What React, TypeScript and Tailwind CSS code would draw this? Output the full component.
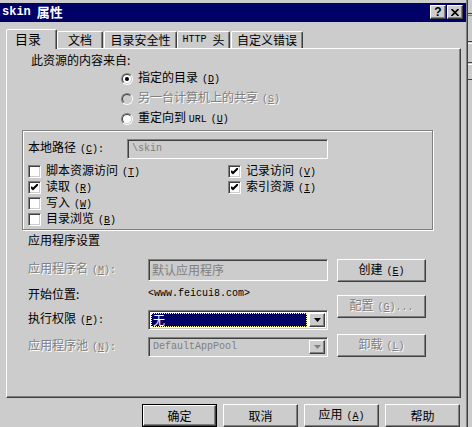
import React from "react";

const mono = "font-['Liberation_Mono','Noto_Sans_CJK_SC',monospace] text-[10px]";
const dis = "text-[#808080] [text-shadow:1px_1px_0_#ffffff]";
const raised =
  "border border-t-white border-l-white border-r-[#404040] border-b-[#404040] shadow-[inset_-1px_-1px_0_#808080]";
const sunken =
  "border border-t-[#808080] border-l-[#808080] border-r-white border-b-white shadow-[inset_1px_1px_0_#404040,inset_-1px_-1px_0_#cccccc]";

function Key({ k, tail = "" }: { k: string; tail?: string }) {
  return (
    <span className={`${mono} ml-[4px]`}>
      (<span className="underline underline-offset-1">{k}</span>){tail}
    </span>
  );
}

function Radio({ on, disabled }: { on?: boolean; disabled?: boolean }) {
  return (
    <span className="w-[12px] h-[12px] rounded-full flex items-center justify-center border border-t-[#808080] border-l-[#808080] border-r-white border-b-white">
      <span
        className={`w-[10px] h-[10px] rounded-full flex items-center justify-center border border-t-[#404040] border-l-[#404040] border-r-[#cccccc] border-b-[#cccccc] ${
          disabled ? "bg-[#cccccc]" : "bg-white"
        }`}
      >
        {on && <span className="w-[4px] h-[4px] rounded-full bg-black" />}
      </span>
    </span>
  );
}

function Check({ on }: { on?: boolean }) {
  return (
    <span className={`w-[13px] h-[13px] shrink-0 bg-white flex items-center justify-center ${sunken}`}>
      {on && (
        <svg width="7" height="7" viewBox="0 0 7 7">
          <path d="M0 3 L2 5 L7 0" stroke="black" strokeWidth="2" fill="none" />
        </svg>
      )}
    </span>
  );
}

function Arrow({ gray }: { gray?: boolean }) {
  return (
    <svg width="7" height="4" viewBox="0 0 7 4">
      <polygon points="0,0 7,0 3.5,4" fill={gray ? "#808080" : "black"} />
    </svg>
  );
}

function Btn({
  children,
  w = "w-[75px]",
  def,
}: {
  children: React.ReactNode;
  w?: string;
  def?: boolean;
}) {
  if (def)
    return (
      <div className={`${w} h-[23px] border border-black flex`}>
        <div className={`flex-1 flex items-center justify-center bg-[#cccccc] ${raised}`}>{children}</div>
      </div>
    );
  return (
    <div className={`${w} h-[23px] flex items-center justify-center bg-[#cccccc] ${raised}`}>{children}</div>
  );
}

function Tab({ label, active, w }: { label: React.ReactNode; active?: boolean; w: string }) {
  return (
    <div
      className={`${w} flex items-center justify-center rounded-t-[2px] border-l border-t border-r border-l-white border-t-white border-r-[#404040] shadow-[inset_-1px_0_0_#808080] bg-[#cccccc] ${
        active ? "h-[20px] -mb-px relative z-10 justify-start pl-[8px] text-[13px]" : "h-[17px]"
      }`}
    >
      {label}
    </div>
  );
}

export default function App() {
  return (
    <div className="w-[472px] h-[427px] overflow-hidden bg-[#cccccc] flex font-['Noto_Sans_CJK_SC',sans-serif] text-[12px] leading-[16px] text-black">
      <div className="w-[466px] shrink-0 flex flex-col pt-[3px]">
        {/* title bar */}
        <div className="h-[19px] bg-[#000066] flex items-center pl-[2px] pr-[3px] text-white font-bold">
          <span className="font-['Liberation_Mono',monospace] text-[12px]">skin</span>
          <span className="ml-[6px] text-[13px]">属性</span>
          <div className="ml-auto flex gap-[1px]">
            <div className={`w-[16px] h-[14px] flex items-center justify-center bg-[#cccccc] text-black ${raised}`}>
              <span className="font-['Liberation_Sans',sans-serif] text-[12px] font-bold leading-none">?</span>
            </div>
            <div className={`w-[16px] h-[14px] flex items-center justify-center bg-[#cccccc] ${raised}`}>
              <svg width="8" height="7" viewBox="0 0 8 7">
                <path d="M0.5 0 L7.5 7 M7.5 0 L0.5 7" stroke="black" strokeWidth="1.6" />
              </svg>
            </div>
          </div>
        </div>

        {/* tabs */}
        <div className="mt-[7px] ml-[6px] h-[19px] flex items-end">
          <Tab active w="w-[51px]" label="目录" />
          <Tab w="w-[46px]" label="文档" />
          <div className="w-[1px]" />
          <Tab w="w-[73px]" label="目录安全性" />
          <Tab
            w="w-[53px]"
            label={
              <span className="flex items-center gap-[6px]">
                <span className={mono}>HTTP</span>
                <span>头</span>
              </span>
            }
          />
          <div className="w-[1px]" />
          <Tab w="w-[72px]" label="自定义错误" />
        </div>

        {/* panel */}
        <div className={`ml-[6px] w-[455px] h-[353px] flex flex-col ${raised}`}>
          <div className="mt-[3px] ml-[24px] h-[16px]">此资源的内容来自:</div>
          <div className="ml-[114px] mt-[1px] flex flex-col">
            <div className="h-[20px] flex items-center gap-[5px]">
              <Radio on />
              <span>
                指定的目录
                <Key k="D" />
              </span>
            </div>
            <div className={`h-[20px] flex items-center gap-[5px] ${dis}`}>
              <Radio disabled />
              <span>
                另一台计算机上的共享
                <Key k="S" />
              </span>
            </div>
            <div className="h-[20px] flex items-center gap-[5px]">
              <Radio />
              <span>
                重定向到 <span className={mono}>URL</span>
                <Key k="U" />
              </span>
            </div>
          </div>

          {/* local path group */}
          <div className="mt-[1px] ml-[15px] w-[411px] h-[100px] border border-[#808080] shadow-[1px_1px_0_#ffffff,inset_1px_1px_0_#ffffff] pl-[5px] pt-[8px]">
            <div className="h-[20px] flex items-center">
              <span className="w-[99px]">
                本地路径
                <Key k="C" tail=":" />
              </span>
              <div className={`w-[201px] h-[20px] flex items-center pl-[4px] text-[#808080] ${mono} ${sunken}`}>
                \skin
              </div>
            </div>
            <div className="mt-[5px] grid grid-cols-[200px_180px]">
              <div className="h-[16px] flex items-center gap-[5px]">
                <Check />
                <span>
                  脚本资源访问
                  <Key k="T" />
                </span>
              </div>
              <div className="h-[16px] flex items-center gap-[5px]">
                <Check on />
                <span>
                  记录访问
                  <Key k="V" />
                </span>
              </div>
              <div className="h-[16px] flex items-center gap-[5px]">
                <Check on />
                <span>
                  读取
                  <Key k="R" />
                </span>
              </div>
              <div className="h-[16px] flex items-center gap-[5px]">
                <Check on />
                <span>
                  索引资源
                  <Key k="I" />
                </span>
              </div>
              <div className="h-[16px] flex items-center gap-[5px]">
                <Check />
                <span>
                  写入
                  <Key k="W" />
                </span>
              </div>
              <div />
              <div className="h-[16px] flex items-center gap-[5px]">
                <Check />
                <span>
                  目录浏览
                  <Key k="B" />
                </span>
              </div>
            </div>
          </div>

          <div className="mt-[2px] ml-[21px] h-[16px]">应用程序设置</div>

          {/* application settings */}
          <div className="mt-[11px] ml-[21px] flex">
            <div className="w-[300px] flex flex-col">
              <div className="h-[22px] flex items-center">
                <span className={`w-[120px] ${dis}`}>
                  应用程序名
                  <Key k="M" tail=":" />
                </span>
                <div className={`w-[180px] h-[22px] flex items-center pl-[3px] text-[#808080] ${sunken}`}>
                  默认应用程序
                </div>
              </div>
              <div className="mt-[5px] h-[16px] flex items-center">
                <span className="w-[120px]">开始位置:</span>
                <span className={mono}>&lt;www.feicui8.com&gt;</span>
              </div>
              <div className="mt-[8px] h-[20px] flex items-center">
                <span className="w-[120px]">
                  执行权限
                  <Key k="P" tail=":" />
                </span>
                <div className={`w-[180px] h-[20px] flex items-center p-[2px] bg-white ${sunken}`}>
                  <div className="flex-1 h-full bg-[#000066] border border-dotted border-[#ffff99] text-white flex items-center pl-[1px]">
                    无
                  </div>
                  <div className={`w-[16px] h-full ml-[2px] flex items-center justify-center bg-[#cccccc] ${raised}`}>
                    <Arrow />
                  </div>
                </div>
              </div>
              <div className="mt-[7px] h-[20px] flex items-center">
                <span className={`w-[120px] ${dis}`}>
                  应用程序池
                  <Key k="N" tail=":" />
                </span>
                <div className={`w-[180px] h-[20px] flex items-center p-[2px] ${sunken}`}>
                  <div className={`flex-1 pl-[2px] text-[#808080] ${mono}`}>DefaultAppPool</div>
                  <div className={`w-[16px] h-full flex items-center justify-center bg-[#cccccc] ${raised}`}>
                    <Arrow gray />
                  </div>
                </div>
              </div>
            </div>
            <div className="ml-[9px] flex flex-col">
              <Btn w="w-[89px]">
                <span>
                  创建
                  <Key k="E" />
                </span>
              </Btn>
              <div className="h-[13px]" />
              <Btn w="w-[89px]">
                <span className={dis}>
                  配置
                  <Key k="G" tail="..." />
                </span>
              </Btn>
              <div className="h-[16px]" />
              <Btn w="w-[89px]">
                <span className={dis}>
                  卸载
                  <Key k="L" />
                </span>
              </Btn>
            </div>
          </div>
        </div>

        {/* dialog buttons */}
        <div className="mt-[6px] pr-[6px] flex justify-end gap-[6px]">
          <Btn def>确定</Btn>
          <Btn>取消</Btn>
          <Btn>
            <span>
              应用
              <Key k="A" />
            </span>
          </Btn>
          <Btn>帮助</Btn>
        </div>
      </div>

      {/* window edge and whatever lies behind */}
      <div className="w-[1px] bg-[#808080]" />
      <div className="w-[1px] bg-[#404040]" />
      <div className="flex-1 flex flex-col">
        <div className="mt-[13px] h-[1px] bg-[#404040]" />
        <div className="mt-[1px] h-[1px] bg-[#808080]" />
        <div className="mt-[25px] h-[1px] bg-[#404040]" />
        <div className="mt-[1px] h-[1px] bg-white" />
        <div className="mt-[18px] h-[1px] bg-[#404040]" />
        <div className="mt-[1px] h-[1px] bg-white" />
        <div className="mt-[14px] h-[1px] bg-[#404040]" />
      </div>
    </div>
  );
}
